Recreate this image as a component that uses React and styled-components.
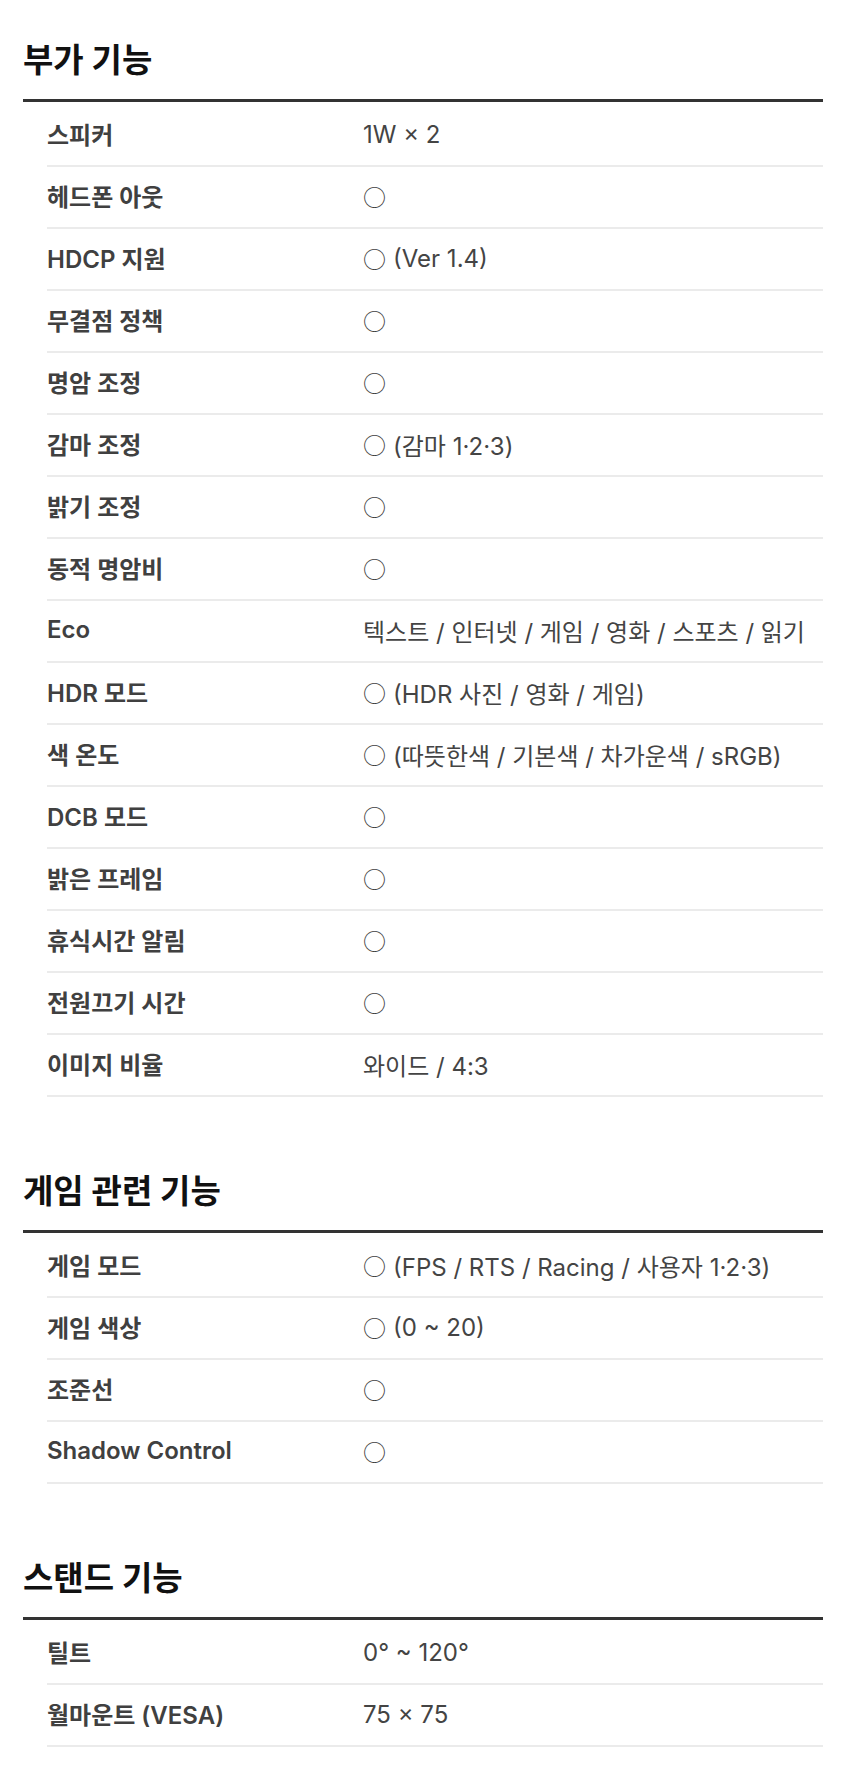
import React from "react";
import styled, { createGlobalStyle } from "styled-components";

const GlobalStyle = createGlobalStyle`
  html, body {
    margin: 0;
    padding: 0;
    background: #ffffff;
  }
  body {
    font-family: "Inter", "Noto Sans CJK KR", "Noto Sans", sans-serif;
    -webkit-font-smoothing: antialiased;
  }
`;

const Page = styled.main`
  width: 800px;
  padding: 40px 37px 36px 23px;
  display: flex;
  flex-direction: column;
  gap: 74px;
`;

const Section = styled.section`
  display: flex;
  flex-direction: column;
`;

const Heading = styled.h2`
  margin: 0 0 19px;
  height: 40px;
  line-height: 40px;
  font-size: 33px;
  font-weight: 700;
  color: #111111;
`;

const List = styled.dl`
  margin: 0;
  padding: 3px 0 0 24px;
  border-top: 3px solid #333333;
`;

const Row = styled.div`
  display: grid;
  grid-template-columns: 316px 1fr;
  align-items: center;
  height: 60px;
  border-bottom: 2px solid #ebebeb;
`;

const Label = styled.dt`
  margin: 0;
  padding-bottom: 4px;
  font-size: 24px;
  font-weight: 600;
  color: #404040;
  white-space: nowrap;
`;

const Value = styled.dd`
  margin: 0;
  padding-bottom: 2px;
  font-size: 24px;
  font-weight: 400;
  color: #444444;
  white-space: nowrap;
  display: flex;
  align-items: center;
`;

const Mark = styled.span`
  font-family: "Noto Sans CJK KR", sans-serif;
  font-size: 23px;
  line-height: 1;
  color: #3f3f3f;
  margin-right: ${(p) => (p.$alone ? "0" : "7px")};
`;

const sections = [
  {
    title: "부가 기능",
    rows: [
      ["스피커", "1W × 2"],
      ["헤드폰 아웃", "○"],
      ["HDCP 지원", "○ (Ver 1.4)"],
      ["무결점 정책", "○"],
      ["명암 조정", "○"],
      ["감마 조정", "○ (감마 1·2·3)"],
      ["밝기 조정", "○"],
      ["동적 명암비", "○"],
      ["Eco", "텍스트 / 인터넷 / 게임 / 영화 / 스포츠 / 읽기"],
      ["HDR 모드", "○ (HDR 사진 / 영화 / 게임)"],
      ["색 온도", "○ (따뜻한색 / 기본색 / 차가운색 / sRGB)"],
      ["DCB 모드", "○"],
      ["밝은 프레임", "○"],
      ["휴식시간 알림", "○"],
      ["전원끄기 시간", "○"],
      ["이미지 비율", "와이드 / 4:3"],
    ],
  },
  {
    title: "게임 관련 기능",
    rows: [
      ["게임 모드", "○ (FPS / RTS / Racing / 사용자 1·2·3)"],
      ["게임 색상", "○ (0 ~ 20)"],
      ["조준선", "○"],
      ["Shadow Control", "○"],
    ],
  },
  {
    title: "스탠드 기능",
    rows: [
      ["틸트", "0° ~ 120°"],
      ["월마운트 (VESA)", "75 × 75"],
    ],
  },
];

function SpecValue({ text }) {
  if (text.startsWith("○")) {
    const rest = text.slice(1).trim();
    return (
      <Value>
        <Mark $alone={!rest}>○</Mark>
        {rest}
      </Value>
    );
  }
  return <Value>{text}</Value>;
}

export default function App() {
  return (
    <>
      <GlobalStyle />
      <Page>
        {sections.map((s) => (
          <Section key={s.title}>
            <Heading>{s.title}</Heading>
            <List>
              {s.rows.map(([k, v]) => (
                <Row key={k}>
                  <Label>{k}</Label>
                  <SpecValue text={v} />
                </Row>
              ))}
            </List>
          </Section>
        ))}
      </Page>
    </>
  );
}
